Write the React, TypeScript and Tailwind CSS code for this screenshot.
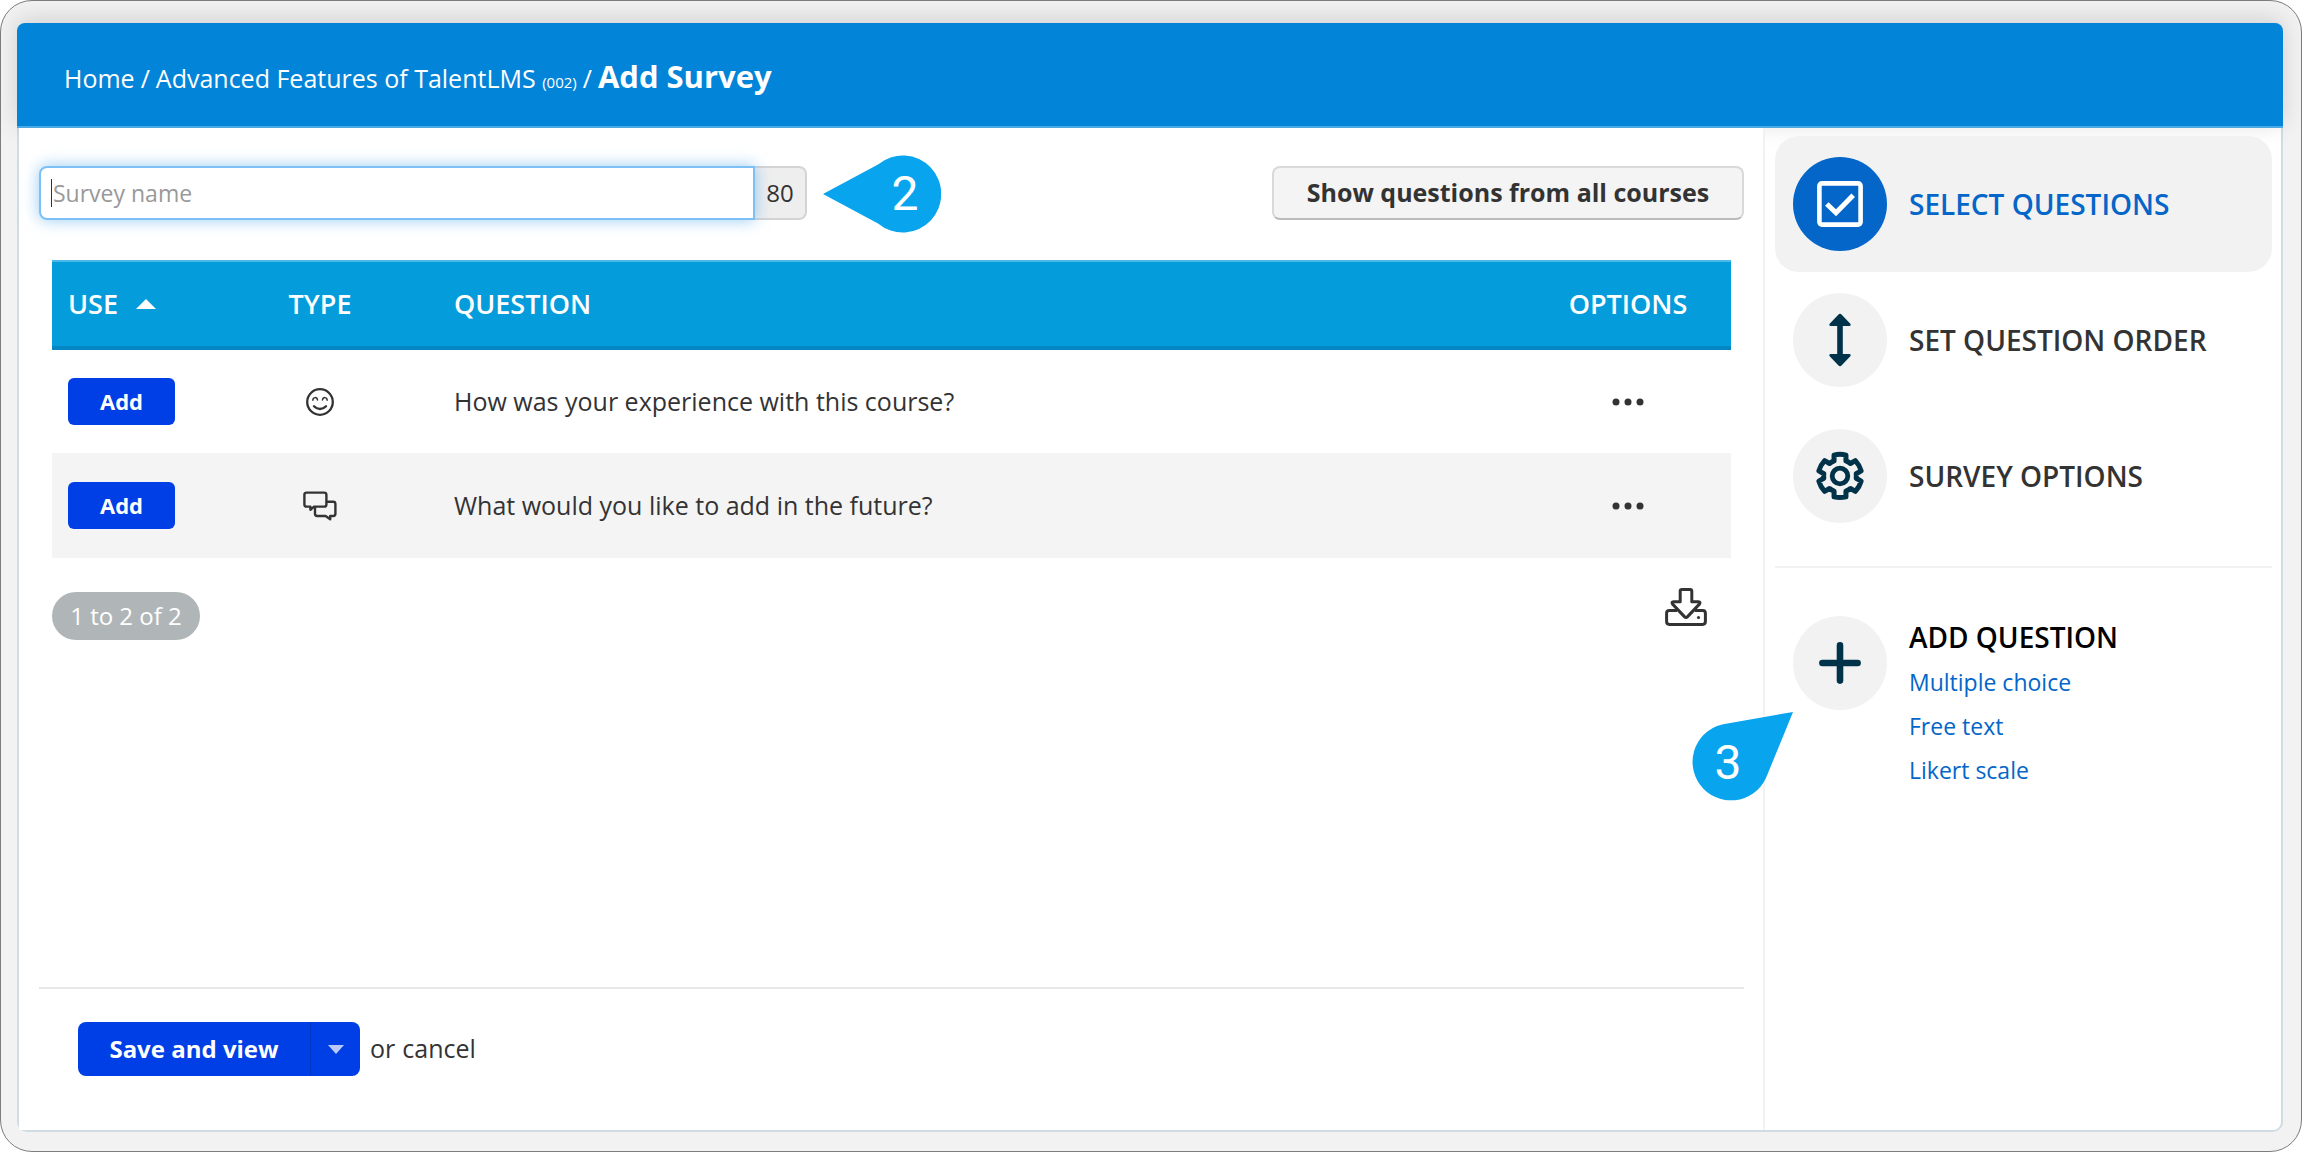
import { ReactNode } from "react";

const questions = [
  { id: 1, type: "smile", text: "How was your experience with this course?" },
  { id: 2, type: "chat", text: "What would you like to add in the future?" },
];

function SmileIcon() {
  return (
    <svg viewBox="0 0 28 28" className="mx-auto size-7" fill="none" stroke="#333" strokeLinecap="round">
      <circle cx="14" cy="14" r="12.8" strokeWidth="2.3" />
      <path d="M6.8 12.2c.4-3.4 4.2-3.4 4.7-.2M16.5 12c.5-3.2 4.3-3.2 4.7.2" strokeWidth="1.5" />
      <path d="M8 18.3c3.4 3.6 8.6 3.6 12 0" strokeWidth="2.4" />
    </svg>
  );
}

function ChatIcon() {
  return (
    <svg viewBox="0 0 34 30" className="mx-auto h-[30px] w-[34px]" fill="none" stroke="#333" strokeWidth="2.4" strokeLinejoin="round">
      <path d="M3.6 1.6h17.6q2.2 0 2.2 2.2v9.6q0 2.2-2.2 2.2H11l-3.6 3.2v-3.2H3.6q-2.2 0-2.2-2.2V3.8q0-2.2 2.2-2.2z" />
      <path d="M23.4 10.8h6.8q2.2 0 2.2 2.2v9.8q0 2.2-2.2 2.2h-3v3.2L22.6 25h-8.4q-2.2 0-2.2-2.2v-7.2" />
    </svg>
  );
}

function DownloadIcon() {
  return (
    <svg viewBox="0 0 42 38" className="h-[38px] w-[42px]" fill="none" stroke="#333" strokeWidth="3" strokeLinejoin="round">
      <path d="M12 22.4H4.4q-2.8 0-2.8 2.8v8.4q0 2.8 2.8 2.8h33.2q2.8 0 2.8-2.8v-8.4q0-2.8-2.8-2.8H30" />
      <path d="M17 1.5h8q1.8 0 1.8 1.8v10.4h6.6q2.6 0 1 2.4L22.6 28.6q-1.6 1.6-3.2 0L7.6 16.1q-1.6-2.4 1-2.4h6.6V3.300q0-1.800 1.800-1.800z" />
      <circle cx="33.5" cy="29.5" r="1.6" fill="#333" stroke="none" />
    </svg>
  );
}

function CheckboxIcon() {
  return (
    <svg viewBox="0 0 46 46" className="size-[46px]" fill="none" stroke="#fff">
      <rect x="2.4" y="2.4" width="41.2" height="41.2" rx="2.5" strokeWidth="4.6" />
      <path d="M9.8 23l9.200 8.800L36.200 14.300" strokeWidth="5" />
    </svg>
  );
}

function OrderIcon() {
  return (
    <svg viewBox="0 0 24 54" className="h-[54px] w-6" fill="#003349">
      <path d="M10.500 1.600q1.500-1.600 3 0l8.600 9q1.600 2.200-1 2.400h-6.300v28h6.300q2.600.2 1 2.400l-8.600 9q-1.500 1.600-3 0l-8.600-9q-1.600-2.200 1-2.400h6.300V13H2.900q-2.600-.2-1-2.400z" />
    </svg>
  );
}

function GearIcon() {
  return (
    <svg viewBox="0 0 50 52" className="h-[52px] w-[50px]" fill="none" stroke="#003349" strokeLinejoin="round">
      <path
        d="M18.400 3.800q6.600-2 13.200 0v6.400q2.800 1.100 5 2.900l5.500-3.200q4.600 5 6.400 11.400l-5.500 3.200q.4 2.500 0 5l5.500 3.200q-1.800 6.400-6.400 11.400l-5.500-3.200q-2.200 1.800-5 2.900v6.400q-6.600 1.200-13.200 0v-6.400q-2.800-1.100-5-2.900l-5.500 3.200q-4.600-5-6.400-11.400L7 29.500q-.4-2.500 0-5l-5.500-3.200q1.800-6.400 6.400-11.400l5.500 3.200q2.200-1.800 5-2.900z"
        transform="translate(2.500 1.700) scale(.9)"
        strokeWidth="5.600"
      />
      <circle cx="25" cy="26" r="7.800" strokeWidth="4.800" />
    </svg>
  );
}

function PlusIcon() {
  return (
    <svg viewBox="0 0 40 40" className="size-11" stroke="#003349" strokeWidth="6" strokeLinecap="round">
      <path d="M20 4v32M4 20h32" />
    </svg>
  );
}

function SideItem({ icon, label, active = false }: { icon: ReactNode; label: string; active?: boolean }) {
  return (
    <a
      href="#"
      className={
        active
          ? "flex h-34 items-center gap-[22px] rounded-3xl bg-[#f2f2f2] pl-[18px] text-[#0466c8]"
          : "flex h-34 items-center gap-[22px] pl-[18px] text-[#333]"
      }
    >
      <span
        className={
          active
            ? "flex size-[94px] items-center justify-center rounded-full bg-[#0466c8]"
            : "flex size-[94px] items-center justify-center rounded-full bg-[#f2f2f2]"
        }
      >
        {icon}
      </span>
      <span className="text-[28px] font-semibold">{label}</span>
    </a>
  );
}

export default function App() {
  return (
    <div className="flex min-h-screen flex-col rounded-[32px] border border-[#7d7d7d] bg-[#f2f2f2] pt-[22px] pr-[18px] pb-[19px] pl-4 font-['Open_Sans',sans-serif] text-[25px] text-[#333]">
      <div className="flex grow flex-col rounded-[10px] border-2 border-t-0 border-[#d0dce3] bg-white">
        <header className="-mx-0.5 flex h-[105px] items-center rounded-t-lg border-b-2 border-[#4aa8e4] bg-[#0284d8] px-[47px] pt-1 text-white shadow-[0_-4px_24px_rgba(0,0,0,0.14)]">
          <nav className="flex items-baseline gap-[6px]">
            <a href="#">Home</a>
            <span>/</span>
            <a href="#">
              Advanced Features of TalentLMS <span className="text-[15px]">(002)</span>
            </a>
            <span>/</span>
            <h1 className="text-[31px] font-bold">Add Survey</h1>
          </nav>
        </header>

        <div className="flex grow">
          <main className="flex grow flex-col border-r-2 border-[#f2f2f2] bg-white pr-[19px] pl-5">
            <div className="mt-[38px] flex items-center justify-between">
              <div className="relative flex h-[54px] w-[768px]">
                <input
                  type="text"
                  aria-label="Survey name"
                  placeholder="Survey name"
                  className="z-10 min-w-0 grow rounded-l-lg border-2 border-[#7cc0f6] bg-white px-3 text-[23px] shadow-[0_0_16px_rgba(82,168,236,0.6)] outline-none placeholder:text-[#999]"
                />
                <span className="absolute top-[13px] left-3 z-20 h-7 w-px bg-[#333]" />
                <span className="flex w-[52px] items-center justify-center rounded-r-lg border-2 border-l-0 border-[#d4d4d4] bg-[#eee] text-2xl">
                  80
                </span>
                <div className="absolute -top-[11px] left-[784px] h-[78px] w-[118px]">
                  <svg viewBox="0 0 118 78" className="size-full" fill="#08a5ee">
                    <path d="M0 39L55 9.500A38.500 38.500 0 1 1 55 68.500z" />
                  </svg>
                  <span className="absolute inset-y-0 right-0 flex w-[72px] items-center justify-center font-[Roboto,sans-serif] text-5xl text-white">
                    2
                  </span>
                </div>
              </div>
              <button className="h-[54px] w-[472px] rounded-lg border-2 border-[#d9d9d9] border-b-[#bbb] bg-[#f4f4f4] font-bold">
                Show questions from all courses
              </button>
            </div>

            <div className="mt-10 px-[13px]">
              <table className="w-full table-fixed">
                <thead>
                  <tr className="h-[87px] border-t-2 border-b-4 border-t-[#4ab8e6] border-b-[#0386c2] bg-[#059cdc] text-[27px] text-white">
                    <th className="w-[186px] pl-4 text-left font-semibold">
                      <button className="flex items-center gap-[18px]">
                        USE
                        <svg viewBox="0 0 20 10" className="h-2.5 w-5" fill="#fff">
                          <path d="M10 0L20 10H0z" />
                        </svg>
                      </button>
                    </th>
                    <th className="w-[164px] font-semibold">TYPE</th>
                    <th className="pl-[52px] text-left font-semibold">QUESTION</th>
                    <th className="w-[206px] font-semibold">OPTIONS</th>
                  </tr>
                </thead>
                <tbody>
                  {questions.map((q) => (
                    <tr key={q.id} className="h-[105px] even:bg-[#f4f4f4]">
                      <td className="pl-4">
                        <button className="block h-[47px] w-[107px] rounded-md bg-[#003ee6] text-[22px] font-bold text-white">
                          Add
                        </button>
                      </td>
                      <td>{q.type === "smile" ? <SmileIcon /> : <ChatIcon />}</td>
                      <td className="pl-[52px]">{q.text}</td>
                      <td>
                        <button aria-label="Options" className="flex w-full justify-center">
                          <svg viewBox="0 0 32 8" className="h-2 w-8" fill="#333">
                            <circle cx="4" cy="4" r="3.500" />
                            <circle cx="16" cy="4" r="3.500" />
                            <circle cx="28" cy="4" r="3.500" />
                          </svg>
                        </button>
                      </td>
                    </tr>
                  ))}
                </tbody>
              </table>

              <div className="mt-[30px] flex justify-between pr-6">
                <span className="mt-1 flex h-12 w-[148px] items-center justify-center rounded-full bg-[#b0b6b8] text-2xl text-white">
                  1 to 2 of 2
                </span>
                <button aria-label="Download" className="self-start">
                  <DownloadIcon />
                </button>
              </div>
            </div>

            <footer className="mt-auto flex h-[143px] items-start gap-2.5 border-t-2 border-[#e8e8e8] pt-[33px] pl-[39px]">
              <div className="flex h-[54px] overflow-hidden rounded-lg bg-[#003ee6] text-2xl font-bold text-white">
                <button className="w-[232px]">Save and view</button>
                <button aria-label="More" className="flex w-[50px] items-center justify-center border-l border-[#0234c4]">
                  <svg viewBox="0 0 16 9" className="h-[9px] w-4" fill="#b9c9f8">
                    <path d="M0 0H16L8 9z" />
                  </svg>
                </button>
              </div>
              <p className="flex h-[54px] items-center gap-[7px]">
                or <a href="#">cancel</a>
              </p>
            </footer>
          </main>

          <aside className="w-[516px] shrink-0 pt-2 pr-[9px] pl-2.5">
            <SideItem icon={<CheckboxIcon />} label="SELECT QUESTIONS" active />
            <SideItem icon={<OrderIcon />} label="SET QUESTION ORDER" />
            <SideItem icon={<GearIcon />} label="SURVEY OPTIONS" />

            <section className="mt-[22px] flex items-start gap-[22px] border-t-2 border-[#f2f2f2] pt-12 pl-[18px]">
              <div className="relative flex size-[94px] items-center justify-center rounded-full bg-[#f2f2f2]">
                <PlusIcon />
                <div className="absolute top-24 -left-[101px] h-[90px] w-[101px]">
                  <svg viewBox="0 0 101 90" className="size-full" fill="#08a5ee">
                    <path d="M101 0L34 11.700A38.500 38.500 0 1 0 74 66z" />
                  </svg>
                  <span className="absolute bottom-0 left-0 flex h-[78px] w-[72px] items-center justify-center font-[Roboto,sans-serif] text-5xl text-white">
                    3
                  </span>
                </div>
              </div>
              <div>
                <h2 className="mb-0.5 text-[28px] font-semibold text-black">ADD QUESTION</h2>
                <ul className="text-[23px] leading-[44px] text-[#0466c8]">
                  <li><a href="#">Multiple choice</a></li>
                  <li><a href="#">Free text</a></li>
                  <li><a href="#">Likert scale</a></li>
                </ul>
              </div>
            </section>
          </aside>
        </div>
      </div>
    </div>
  );
}
